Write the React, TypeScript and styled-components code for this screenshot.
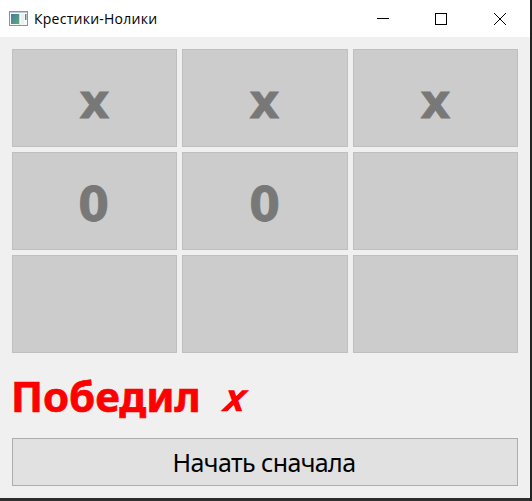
import React from "react";
import styled, { createGlobalStyle } from "styled-components";

const GlobalStyle = createGlobalStyle`
  * { box-sizing: border-box; }
  html, body { margin: 0; padding: 0; overflow: hidden; }
  button { margin: 0; padding: 0; border-radius: 0; }
`;

const Desktop = styled.div`
  width: 532px;
  height: 501px;
  background: linear-gradient(90deg, #2e2e2f 0 530px, #222223 530px);
`;

const Window = styled.main`
  display: flex;
  flex-direction: column;
  width: 530px;
  height: 498px;
  background: #f0f0f0;
`;

const TitleBar = styled.header`
  display: flex;
  align-items: center;
  height: 37px;
  padding-left: 9px;
  background: #fff;
`;

const Title = styled.h1`
  flex: 1;
  margin: 0 0 0 5px;
  font: 400 14px/20px "Open Sans", "Noto Sans", sans-serif;
  color: #000;
  white-space: nowrap;
`;

const Caption = styled.span<{ $spread: string }>`
  display: inline-block;
  letter-spacing: ${(p) => p.$spread};
`;

const WindowControl = styled.button`
  display: flex;
  align-items: center;
  justify-content: center;
  width: 58px;
  height: 37px;
  border: 0;
  background: transparent;
`;

const Controls = styled.div`
  display: flex;
  margin-right: 2px;
`;

const CloseGlyph = styled.svg`
  margin-left: 2px;
`;

const Board = styled.section`
  display: grid;
  grid-template-columns: 165px 166px 165px;
  grid-template-rows: repeat(3, 98px);
  gap: 5px;
  margin: 12px 12px 0;
`;

const Cell = styled.button`
  display: flex;
  align-items: center;
  justify-content: center;
  border: 1px solid #bfbfbf;
  background: #ccc;
  color: #787878;
  font: 700 48px/56px "DejaVu Sans", sans-serif;
  padding: 5px 1px 0 0;
`;

const Mark = styled.span<{ $nought: boolean }>`
  display: inline-block;
  transform: scaleX(${(p) => (p.$nought ? 0.92 : 0.98)});
  -webkit-text-stroke: 0.8px #787878;
`;

const Result = styled.div`
  display: flex;
  align-items: baseline;
  height: 85px;
  padding: 13px 0 0 11px;
  color: #f00;
  white-space: nowrap;
`;

const ResultLabel = styled.span`
  width: 213px;
  font: 700 42px/60px "Noto Sans", sans-serif;
  -webkit-text-stroke: 0.7px #f00;
`;

const Winner = styled.span`
  display: inline-block;
  font: italic 400 35px/40px "Liberation Sans", sans-serif;
  -webkit-text-stroke: 2.6px #f00;
  stroke-linejoin: round;
  transform: translateY(-2px) skewX(-8deg);
  transform-origin: left bottom;
`;

const Restart = styled.button`
  display: flex;
  align-items: center;
  justify-content: center;
  height: 48px;
  margin: 0 12px;
  padding-right: 2px;
  border: 1px solid #adadad;
  background: #e1e1e1;
  color: #000;
  font: 400 25px/36px "Noto Sans", sans-serif;
`;

const AppIcon = () => (
  <svg width="20" height="16" viewBox="0 0 20 16" aria-hidden="true">
    <defs>
      <linearGradient id="screen" x1="0" y1="0" x2="1" y2="1">
        <stop offset="0" stopColor="#4779a5" />
        <stop offset="1" stopColor="#58ac75" />
      </linearGradient>
    </defs>
    <rect x="0.5" y="0.5" width="18" height="14" fill="#f7f8f9" stroke="#8b949c" />
    <path d="M1 1.5H18" stroke="#c4cbd0" />
    <rect x="2" y="3" width="8" height="10" fill="url(#screen)" />
    <path d="M10.5 3V14" stroke="#d4d8da" />
    <rect x="12" y="3" width="3" height="10" fill="#eceff0" />
    <rect x="16" y="3" width="1.5" height="6" fill="url(#screen)" />
  </svg>
);

const cells = ["x", "x", "x", "0", "0", "", "", "", ""];

export default function App() {
  return (
    <>
      <GlobalStyle />
      <Desktop>
        <Window>
          <TitleBar>
            <AppIcon />
            <Title><Caption $spread="0.25px">Крестики-Нолики</Caption></Title>
            <Controls>
              <WindowControl aria-label="Свернуть">
                <svg width="12" height="12"><path d="M0 5.5H12" stroke="#000" /></svg>
              </WindowControl>
              <WindowControl aria-label="Развернуть">
                <svg width="12" height="12"><rect x=".5" y=".5" width="11" height="11" fill="none" stroke="#000" /></svg>
              </WindowControl>
              <WindowControl aria-label="Закрыть">
                <CloseGlyph width="12" height="12"><path d="M0 0L12 12M12 0L0 12" stroke="#000" /></CloseGlyph>
              </WindowControl>
            </Controls>
          </TitleBar>
          <Board>
            {cells.map((mark, i) => (
              <Cell key={i}>{mark && <Mark $nought={mark === "0"}>{mark}</Mark>}</Cell>
            ))}
          </Board>
          <Result>
            <ResultLabel><Caption $spread="0">Победил</Caption></ResultLabel>
            <Winner>x</Winner>
          </Result>
          <Restart><Caption $spread="-0.6px">Начать сначала</Caption></Restart>
        </Window>
      </Desktop>
    </>
  );
}
